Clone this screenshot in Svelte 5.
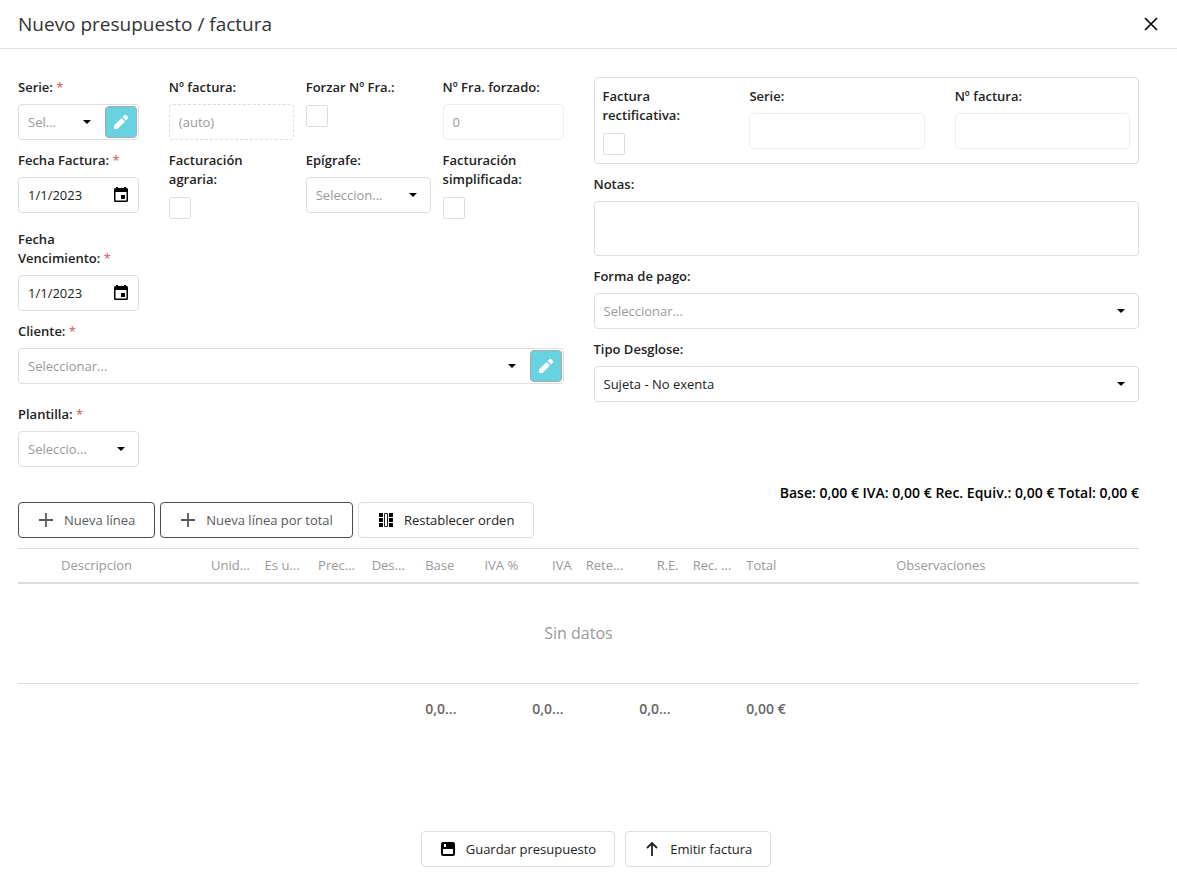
<script lang="ts">
	type Column = { title?: string; width: number; align?: string; total?: string };

	const columns: Column[] = [
		{ width: 72 },
		{ title: 'Descripcion', width: 300 },
		{ title: 'Unid...', width: 107 },
		{ title: 'Es u...', width: 107 },
		{ title: 'Prec...', width: 107 },
		{ title: 'Des...', width: 107 },
		{ title: 'Base', width: 107, total: '0,0...' },
		{ title: 'IVA %', width: 107, align: 'right' },
		{ title: 'IVA', width: 107, align: 'right', total: '0,0...' },
		{ title: 'Rete...', width: 107 },
		{ title: 'R.E.', width: 107, align: 'right', total: '0,0...' },
		{ title: 'Rec. ...', width: 107 },
		{ title: 'Total', width: 107, total: '0,00 €' },
		{ title: 'Observaciones', width: 592, align: 'center' },
		{ width: 100 }
	];

	const totalWidth = columns.reduce((sum, column) => sum + column.width, 0);

	let invoiceDate = $state('1/1/2023');
	let dueDate = $state('1/1/2023');
	let notes = $state('');
</script>

{#snippet label(id: string, text: string, required = false)}
	<label for={id}>{text}{#if required}&nbsp;<span class="required">*</span>{/if}</label>
{/snippet}

{#snippet pencil()}
	<svg viewBox="0 0 16 16" width="16" height="16" fill="currentColor" aria-hidden="true">
		<path d="M1 11.6 8.6 4l3.4 3.400L4.400 15H1zM9.600 3l1.700-1.700a1.500 1.500 0 0 1 2 0l1.400 1.400a1.500 1.500 0 0 1 0 2L13 6.400z" />
	</svg>
{/snippet}

{#snippet plus()}
	<svg viewBox="0 0 16 16" width="16" height="16" fill="none" stroke="currentColor" stroke-width="1.8" aria-hidden="true">
		<path d="M8 1v14M1 8h14" />
	</svg>
{/snippet}

{#snippet select(id: string, text: string, edit = false, filled = false)}
	<div class="combo">
		<div class="picker" class:with-edit={edit}>
			<select {id} class:filled>
				<option>{text}</option>
			</select>
			<svg class="arrow" viewBox="0 0 8 4" width="8" height="4" aria-hidden="true">
				<path d="M0 0h8L4 4z" />
			</svg>
		</div>
		{#if edit}
			<button class="edit" type="button" aria-label="Editar">{@render pencil()}</button>
		{/if}
	</div>
{/snippet}

{#snippet calendar()}
	<button class="calendar" type="button" aria-label="Abrir calendario">
		<svg viewBox="0 0 16 16" width="16" height="16" aria-hidden="true">
			<path
				fill-rule="evenodd"
				d="M3 0h2v1h6V0h2v1h.5A1.500 1.500 0 0 1 15 2.500v11a1.500 1.500 0 0 1-1.500 1.500h-11A1.500 1.500 0 0 1 1 13.500v-11A1.500 1.500 0 0 1 2.500 1H3zM2.500 5v8.500h11V5zM8 8h4v4H8z"
			/>
		</svg>
	</button>
{/snippet}

<div class="popup">
	<header>
		<h1>Nuevo presupuesto / factura</h1>
		<button class="close" type="button" aria-label="Cerrar">
			<svg viewBox="0 0 14 14" width="14" height="14" fill="none" stroke="currentColor" stroke-width="1.6" aria-hidden="true">
				<path d="M1 1l12 12M13 1L1 13" />
			</svg>
		</button>
	</header>

	<main>
		<div class="form">
			<div class="main-fields">
				<div class="field first">
					{@render label('serie', 'Serie:', true)}
					{@render select('serie', 'Sel...', true)}
				</div>
				<div class="field">
					{@render label('numero', 'Nº factura:')}
					<input id="numero" class="box auto" type="text" placeholder="(auto)" readonly />
				</div>
				<div class="field">
					{@render label('forzar', 'Forzar Nº Fra.:')}
					<input id="forzar" type="checkbox" />
				</div>
				<div class="field">
					{@render label('forzado', 'Nº Fra. forzado:')}
					<input id="forzado" class="box" type="text" value="0" disabled />
				</div>

				<div class="field first">
					{@render label('fecha', 'Fecha Factura:', true)}
					<div class="combo">
						<input id="fecha" type="text" bind:value={invoiceDate} />
						{@render calendar()}
					</div>
				</div>
				<div class="field">
					{@render label('agraria', 'Facturación agraria:')}
					<input id="agraria" type="checkbox" />
				</div>
				<div class="field">
					{@render label('epigrafe', 'Epígrafe:')}
					{@render select('epigrafe', 'Seleccion...')}
				</div>
				<div class="field">
					{@render label('simplificada', 'Facturación simplificada:')}
					<input id="simplificada" type="checkbox" />
				</div>

				<div class="field first row-start">
					{@render label('vencimiento', 'Fecha Vencimiento:', true)}
					<div class="combo">
						<input id="vencimiento" type="text" bind:value={dueDate} />
						{@render calendar()}
					</div>
				</div>

				<div class="field full">
					{@render label('cliente', 'Cliente:', true)}
					{@render select('cliente', 'Seleccionar...', true)}
				</div>

				<div class="field first row-start">
					{@render label('plantilla', 'Plantilla:', true)}
					{@render select('plantilla', 'Seleccio...')}
				</div>
			</div>

			<div class="side-fields">
				<div class="rectification">
					<div class="field">
						{@render label('rectificativa', 'Factura rectificativa:')}
						<input id="rectificativa" type="checkbox" />
					</div>
					<div class="field">
						{@render label('serie-rect', 'Serie:')}
						<input id="serie-rect" class="box" type="text" disabled />
					</div>
					<div class="field">
						{@render label('numero-rect', 'Nº factura:')}
						<input id="numero-rect" class="box" type="text" disabled />
					</div>
				</div>
				<div class="field">
					{@render label('notas', 'Notas:')}
					<textarea id="notas" bind:value={notes}></textarea>
				</div>
				<div class="field">
					{@render label('pago', 'Forma de pago:')}
					{@render select('pago', 'Seleccionar...')}
				</div>
				<div class="field">
					{@render label('desglose', 'Tipo Desglose:')}
					{@render select('desglose', 'Sujeta - No exenta', false, true)}
				</div>
			</div>
		</div>

		<p class="summary">Base: 0,00 € IVA: 0,00 € Rec. Equiv.: 0,00 € Total: 0,00 €</p>

		<div class="toolbar">
			<button class="action outlined" type="button">{@render plus()}Nueva línea</button>
			<button class="action outlined" type="button">{@render plus()}Nueva línea por total</button>
			<button class="action" type="button">
				<svg viewBox="0 0 16 16" width="16" height="16" aria-hidden="true">
					<path d="M1 1h4v4H1zM1 6h4v4H1zM1 11h4v4H1zM11 1h4v4h-4zM11 6h4v4h-4zM11 11h4v4h-4z" />
					<path d="M6.500 1.500h3v13h-3z" fill="none" stroke="currentColor" />
				</svg>
				Restablecer orden
			</button>
		</div>

		<table>
			<colgroup>
				{#each columns as column}
					<col style:width="{(column.width / totalWidth) * 100}%" />
				{/each}
			</colgroup>
			<thead>
				<tr>
					{#each columns as column}
						<th class={column.align}>{column.title ?? ''}</th>
					{/each}
				</tr>
			</thead>
			<tbody>
				<tr>
					<td class="empty" colspan={columns.length}>Sin datos</td>
				</tr>
			</tbody>
			<tfoot>
				<tr>
					{#each columns as column}
						<td>{column.total ?? ''}</td>
					{/each}
				</tr>
			</tfoot>
		</table>
	</main>

	<footer>
		<button class="action" type="button">
			<svg viewBox="0 0 16 16" width="16" height="16" aria-hidden="true">
				<path
					fill-rule="evenodd"
					d="M3 1h10a2 2 0 0 1 2 2v10a2 2 0 0 1-2 2H3a2 2 0 0 1-2-2V3a2 2 0 0 1 2-2zM4 3v3h2V3zM3 8v5h10V8z"
				/>
			</svg>
			Guardar presupuesto
		</button>
		<button class="action" type="button">
			<svg viewBox="0 0 16 16" width="16" height="16" fill="none" stroke="currentColor" stroke-width="1.8" aria-hidden="true">
				<path d="M8 15V2M3 7l5-5 5 5" />
			</svg>
			Emitir factura
		</button>
	</footer>
</div>

<style>
	:global(body) {
		margin: 0;
		background: #fff;
	}

	.popup {
		display: flex;
		flex-direction: column;
		min-height: 100vh;
		color: #000;
		font-family: 'Open Sans', 'Noto Sans', sans-serif;
		font-size: 13px;
		line-height: 19px;
	}

	.popup * {
		box-sizing: border-box;
	}

	button,
	input,
	select,
	textarea {
		margin: 0;
		color: inherit;
		font: inherit;
	}

	svg {
		flex: none;
	}

	header {
		display: flex;
		align-items: center;
		justify-content: space-between;
		height: 49px;
		padding: 0 18px;
		border-bottom: 1px solid #ddd;
	}

	h1 {
		margin: 0;
		color: #333;
		font-size: 19px;
		font-weight: 400;
		line-height: 28px;
	}

	.close {
		display: flex;
		padding: 1px;
		border: 0;
		background: none;
	}

	main {
		flex: 1;
		padding: 28px 38px 0 18px;
	}

	.form {
		display: grid;
		grid-template-columns: 1fr 1fr;
		gap: 30px;
	}

	.main-fields {
		display: grid;
		grid-template-columns: 139fr 125fr 125fr 121fr;
		gap: 11px 12px;
		align-items: start;
		padding-top: 1px;
	}

	.side-fields {
		display: flex;
		flex-direction: column;
		gap: 11px;
	}

	.field {
		display: flex;
		flex-direction: column;
		align-items: flex-start;
		gap: 7px;
		min-width: 0;
	}

	.first {
		padding-right: 18px;
	}

	.row-start {
		grid-column: 1;
	}

	.full {
		grid-column: 1 / -1;
		padding-bottom: 10px;
	}

	label {
		padding-right: 8px;
		color: #222;
		font-weight: 600;
	}

	.required {
		color: #d9534f;
		font-weight: 400;
	}

	.combo,
	.box,
	textarea {
		width: 100%;
		height: 36px;
		border: 1px solid #ddd;
		border-radius: 4px;
		background: #fff;
	}

	.combo {
		display: flex;
		padding: 1px;
	}

	.box {
		padding: 0 9px;
	}

	.box:disabled {
		border-color: #eee;
		color: #999;
	}

	.auto {
		border-style: dashed;
	}

	.auto::placeholder {
		color: #999;
		opacity: 1;
	}

	.combo input {
		flex: 1;
		width: 0;
		padding: 0 0 0 8px;
		border: 0;
		color: #222;
		outline: 0;
	}

	.calendar {
		display: grid;
		place-items: center;
		width: 32px;
		padding: 0;
		border: 0;
		background: none;
	}

	.picker {
		display: grid;
		flex: 1;
		align-items: center;
		min-width: 0;
	}

	.with-edit {
		padding-right: 2px;
	}

	select {
		grid-area: 1 / 1;
		width: 100%;
		height: 32px;
		padding: 0 28px 0 8px;
		border: 0;
		outline: 0;
		background: none;
		color: #999;
		appearance: none;
	}

	select.filled {
		color: #222;
	}

	.arrow {
		grid-area: 1 / 1;
		justify-self: end;
		margin-right: 12px;
		pointer-events: none;
	}

	.edit {
		display: grid;
		place-items: center;
		width: 32px;
		height: 32px;
		padding: 0;
		border: 1px solid #aaa;
		border-radius: 4px;
		background: #67d2e0;
		color: #fff;
	}

	input[type='checkbox'] {
		width: 22px;
		height: 22px;
		margin-top: 1px;
		border: 1px solid #ddd;
		border-radius: 2px;
		background: #fff;
		appearance: none;
	}

	input[type='checkbox']:checked {
		background: #67d2e0;
	}

	.rectification {
		display: grid;
		grid-template-columns: 2fr 3fr 3fr;
		gap: 30px;
		padding: 9px 8px 8px;
		border: 1px solid #ddd;
		border-radius: 4px;
	}

	textarea {
		display: block;
		height: 55px;
		padding: 8px 9px;
		resize: none;
	}

	.summary {
		margin: 17px 0 0;
		font-size: 14px;
		font-weight: 600;
		line-height: 18px;
		text-align: right;
	}

	.toolbar {
		display: flex;
		gap: 5px;
		margin-bottom: 10px;
	}

	.action {
		display: flex;
		align-items: center;
		gap: 10px;
		height: 36px;
		padding: 0 18px;
		border: 1px solid #ddd;
		border-radius: 4px;
		background: #fff;
		color: #222;
	}

	.toolbar .action {
		padding: 0 19px;
	}

	.action.outlined {
		border-color: #4d4d4d;
		color: #595959;
	}

	table {
		width: 100%;
		border-top: 1px solid #ddd;
		border-spacing: 0;
		table-layout: fixed;
	}

	th,
	td {
		padding: 7px;
		text-align: left;
		white-space: nowrap;
	}

	th {
		border-bottom: 2px solid #ddd;
		color: #999;
		font-weight: 400;
	}

	.right {
		text-align: right;
	}

	.center {
		text-align: center;
	}

	.empty {
		height: 100px;
		border-bottom: 1px solid #ddd;
		color: #999;
		font-size: 16px;
		text-align: center;
	}

	tfoot td {
		padding-top: 15px;
		color: #666;
		font-size: 14px;
		font-weight: 600;
	}

	footer {
		display: flex;
		justify-content: center;
		gap: 10px;
		padding: 13px 0 13px 15px;
	}
</style>
